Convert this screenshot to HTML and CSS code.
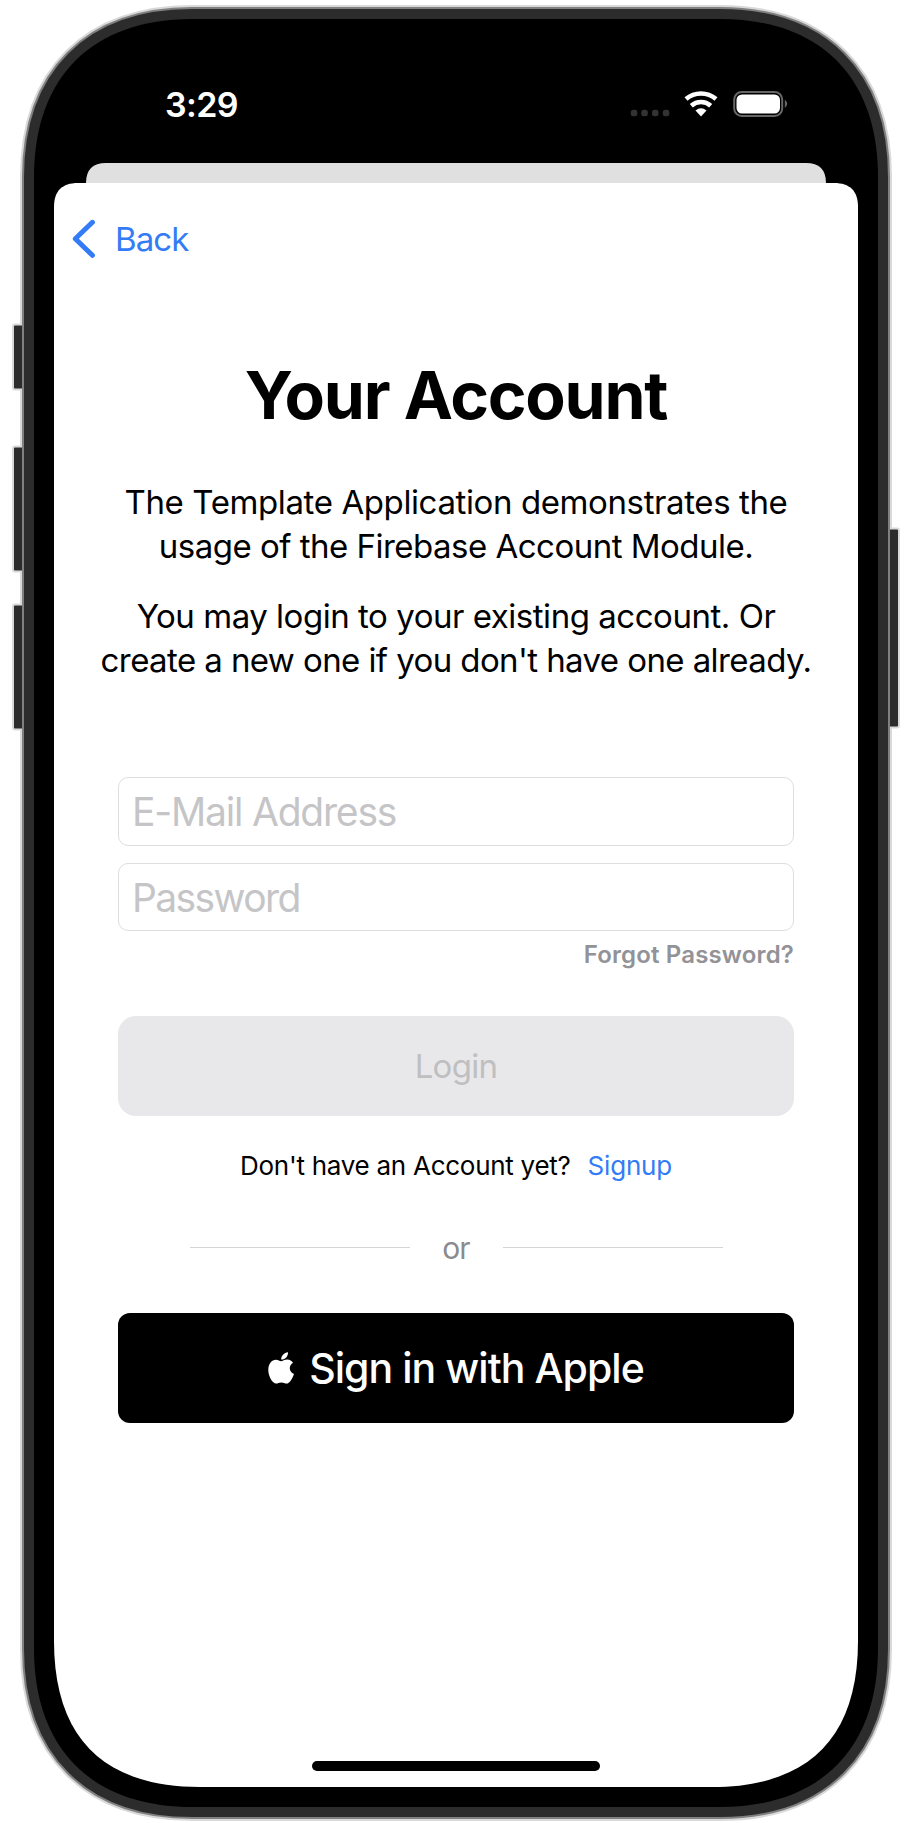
FILE: index.html
```
<!DOCTYPE html>
<html lang="en">
<head>
<meta charset="utf-8">
<title>Your Account</title>
<link rel="stylesheet" href="styles.css">
</head>
<body>
<div class="device">
  <svg class="bezel" viewBox="0 0 912 1823" aria-hidden="true">
    <path d="M192 19H720C820 19 878 77 878 177V1649C878 1749 820 1807 720 1807H192C92 1807 34 1749 34 1649V177C34 77 92 19 192 19Z" stroke="#d9d9d9" stroke-width="28"/>
    <g class="side-buttons">
      <rect x="13" y="324.500" width="12" height="65" rx="2"/>
      <rect x="13" y="446.500" width="12" height="125" rx="2"/>
      <rect x="13" y="604.500" width="12" height="125" rx="2"/>
      <rect x="886" y="528.500" width="13" height="199" rx="2"/>
    </g>
    <path d="M192 19H720C820 19 878 77 878 177V1649C878 1749 820 1807 720 1807H192C92 1807 34 1749 34 1649V177C34 77 92 19 192 19Z" stroke="#808080" stroke-width="24"/>
    <path d="M192 19H720C820 19 878 77 878 177V1649C878 1749 820 1807 720 1807H192C92 1807 34 1749 34 1649V177C34 77 92 19 192 19Z" stroke="#2c2c2c" stroke-width="20"/>
    <path d="M192 19H720C820 19 878 77 878 177V1649C878 1749 820 1807 720 1807H192C92 1807 34 1749 34 1649V177C34 77 92 19 192 19Z" fill="#000"/>
    <path d="M86 190V183Q86 163 106 163H806Q826 163 826 183V190Z" fill="#e0e0e0"/>
    <path d="M78 183H834C850 183 858 191 858 207V1641C858 1738 808 1787 712 1787H200C104 1787 54 1738 54 1641V207C54 191 62 183 78 183Z" fill="#fff"/>
  </svg>
  <div class="screen">
    <header class="status">
      <span class="time">3:29</span>
      <svg class="status-icons" viewBox="0 0 160 28">
        <g fill="#333"><rect x="0.800" y="18.800" width="6.500" height="6.500" rx="2.500"/><rect x="11.300" y="18.800" width="6.500" height="6.500" rx="2.500"/><rect x="22" y="18.800" width="6.500" height="6.500" rx="2.500"/><rect x="32.800" y="18.800" width="6.500" height="6.500" rx="2.500"/></g>
        <g fill="none" stroke="#fff" stroke-width="4.600"><path d="M56 8.100A23 23 0 0 1 86 8.100"/><path d="M61.300 14.700A14.500 14.500 0 0 1 80.700 14.700"/></g>
        <path d="M65.500 19.500Q71 15.100 76.500 19.500L71 25.500Z" fill="#fff"/>
        <rect x="104.200" y="1" width="48" height="24" rx="7.500" fill="none" stroke="#666" stroke-width="2"/>
        <rect x="106.500" y="3.500" width="43.500" height="19" rx="5.500" fill="#fff"/>
        <path d="M154.800 8.500Q159.500 12.800 154.800 17Z" fill="#666"/>
      </svg>
    </header>
    <nav class="nav">
      <svg class="chevron" viewBox="0 0 24 40"><path d="M21.400 3.300L4.300 19.700L21.400 36.300" fill="none" stroke="#347cf6" stroke-width="5" stroke-linecap="round" stroke-linejoin="round"/></svg>
      <a class="back">Back</a>
    </nav>
    <main class="content">
      <h1 class="title">Your Account</h1>
      <p class="para"><span class="line-a">The Template Application demonstrates the</span><br><span class="line-b">usage of the Firebase Account Module.</span></p>
      <p class="para"><span class="line-c">You may login to your existing account. Or</span><br><span class="line-d">create a new one if you don't have one already.</span></p>
      <form class="form">
        <div class="field">E-Mail Address</div>
        <div class="field field-password">Password</div>
        <a class="forgot">Forgot Password?</a>
        <div class="login">Login</div>
        <div class="signup"><span class="ask">Don't have an Account yet?</span><a class="link">Signup</a></div>
        <div class="divider"><i></i><span>or</span><i></i></div>
        <div class="apple">
          <svg class="apple-logo" viewBox="0 0 26 32"><path d="M20 0.200C20.300 4.400 17 7.700 13.200 7.500C12.900 3.900 16.200 0.600 20 0.200Z"/><path d="M13.100 9.200C14.600 9.200 16.400 7.500 19.300 7.500C21.700 7.500 23.900 8.800 25 10.700C20.300 13.500 20.900 20 26 21.900C25 25 21.900 31.600 18.600 31.600C16.600 31.600 15.900 30.400 13.400 30.400C10.800 30.400 10.100 31.600 8.100 31.600C4.500 31.600 0.300 24.400 0.300 18C0.300 11.500 4 7.700 7.800 7.700C10.200 7.700 11.800 9.200 13.100 9.200Z"/></svg>
          <span>Sign in with Apple</span>
        </div>
      </form>
    </main>
    <div class="home"></div>
  </div>
</div>
</body>
</html>
```
FILE: styles.css
```
* { box-sizing: border-box; }
body { margin: 0; background: #fff; font-family: Inter, "Liberation Sans", sans-serif; color: #000; }
.device { position: relative; width: 912px; height: 1823px; overflow: hidden; }
.bezel { position: absolute; inset: 0; width: 912px; height: 1823px; }
.side-buttons { fill: #2c2c2c; stroke: #d9d9d9; stroke-width: 2; }
.screen { position: relative; display: flex; flex-direction: column; width: 804px; height: 1787px; margin: 0 auto; white-space: nowrap; }
.status { display: flex; justify-content: space-between; height: 183px; padding: 91px 68px 0 111px; }
.time { color: #fff; font-size: 34px; line-height: 28px; font-weight: 600; letter-spacing: -0.6px; }
.status-icons { width: 160px; height: 28px; }
.nav { display: flex; height: 112px; padding: 36px 0 0 17px; }
.chevron { width: 24px; height: 40px; }
.back { margin-left: 20px; font-size: 33px; line-height: 40px; letter-spacing: -0.9px; color: #347cf6; }
.content { display: flex; flex-direction: column; align-items: center; padding-top: 61px; }
.title { margin: 0 0 44px; font-size: 66px; line-height: 79px; padding-bottom: 1px; font-weight: 700; letter-spacing: -1.25px; }
.para { margin: 0 0 26px; font-size: 33px; line-height: 44px; text-align: center; }
.line-a { letter-spacing: -0.39px; }
.line-b { letter-spacing: -0.51px; }
.line-c { letter-spacing: -0.47px; }
.line-d { letter-spacing: -0.59px; }
.form { display: flex; flex-direction: column; width: 676px; margin-top: 69px; }
.field { height: 69px; margin-bottom: 17px; padding-left: 13px; border: 1px solid #dedee0; border-radius: 10px; color: #c5c5c7; font-size: 39px; line-height: 67px; letter-spacing: -1.2px; }
.field-password { height: 68px; line-height: 67px; letter-spacing: -1.6px; }
.forgot { align-self: flex-end; margin-top: -9px; font-size: 24px; line-height: 32px; font-weight: 600; letter-spacing: 0.15px; color: #929297; }
.login { height: 100px; margin-top: 45px; border-radius: 18px; background: #e8e8ea; color: #bfbfc1; font-size: 33px; line-height: 101px; letter-spacing: -0.7px; text-align: center; }
.signup { display: flex; justify-content: center; gap: 17px; margin-top: 34px; font-size: 26px; line-height: 32px; }
.ask { letter-spacing: -0.27px; }
.link { color: #347cf6; letter-spacing: -0.2px; }
.divider { display: flex; align-items: center; justify-content: center; height: 32px; margin-top: 49px; gap: 32px; color: #8b8b8f; font-size: 30px; }
.divider span { width: 29px; padding-top: 2px; letter-spacing: -1px; text-align: center; }
.divider i { width: 220px; height: 1px; background: #d5d5d7; }
.apple { display: flex; align-items: center; justify-content: center; height: 110px; margin-top: 50px; padding-bottom: 1px; border-radius: 12px; background: #000; color: #fff; font-size: 41px; font-weight: 500; letter-spacing: -0.95px; gap: 15px; }
.apple-logo { width: 26px; height: 32px; fill: #fff; }
.home { position: absolute; left: 258px; bottom: 16px; width: 288px; height: 10px; border-radius: 5px; background: #000; }
```
